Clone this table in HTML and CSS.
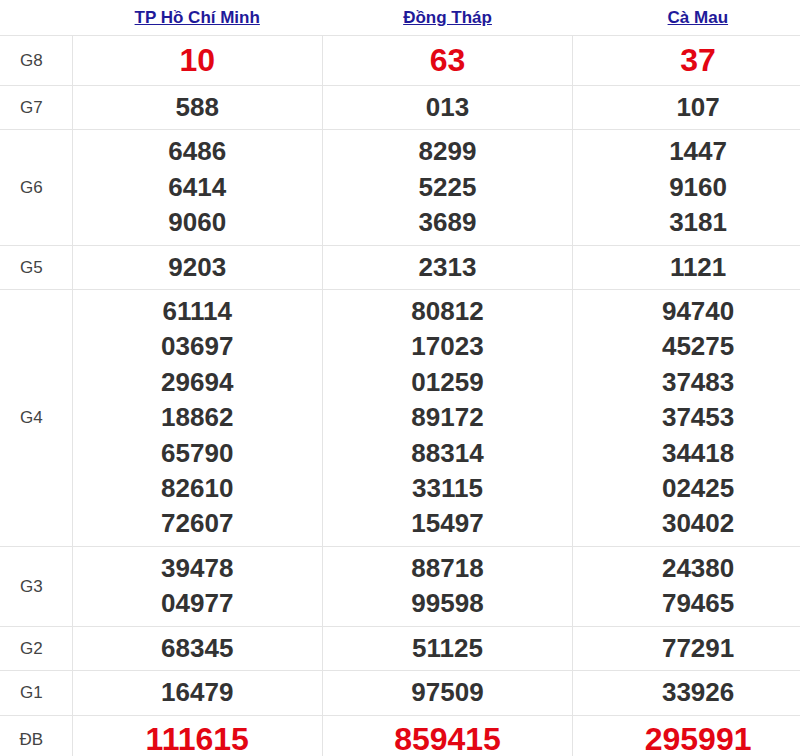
FILE: index.html
```html
<!DOCTYPE html>
<html lang="vi">
<head>
<meta charset="utf-8">
<title>Kết quả xổ số</title>
<link rel="stylesheet" href="styles.css">
</head>
<body>
<table class="kq">
  <colgroup>
    <col class="c-label">
    <col class="c-prov">
    <col class="c-prov">
    <col class="c-prov">
  </colgroup>
  <thead>
    <tr class="head">
      <th></th>
      <th><a href="#">TP Hồ Chí Minh</a></th>
      <th><a href="#">Đồng Tháp</a></th>
      <th><a href="#">Cà Mau</a></th>
    </tr>
  </thead>
  <tbody>
    <tr class="big">
      <td class="lbl">G8</td>
      <td class="red">10</td><td class="red">63</td><td class="red">37</td>
    </tr>
    <tr>
      <td class="lbl">G7</td>
      <td>588</td><td>013</td><td>107</td>
    </tr>
    <tr>
      <td class="lbl">G6</td>
      <td><div>6486</div><div>6414</div><div>9060</div></td>
      <td><div>8299</div><div>5225</div><div>3689</div></td>
      <td><div>1447</div><div>9160</div><div>3181</div></td>
    </tr>
    <tr>
      <td class="lbl">G5</td>
      <td>9203</td><td>2313</td><td>1121</td>
    </tr>
    <tr>
      <td class="lbl">G4</td>
      <td><div>61114</div><div>03697</div><div>29694</div><div>18862</div><div>65790</div><div>82610</div><div>72607</div></td>
      <td><div>80812</div><div>17023</div><div>01259</div><div>89172</div><div>88314</div><div>33115</div><div>15497</div></td>
      <td><div>94740</div><div>45275</div><div>37483</div><div>37453</div><div>34418</div><div>02425</div><div>30402</div></td>
    </tr>
    <tr>
      <td class="lbl">G3</td>
      <td><div>39478</div><div>04977</div></td>
      <td><div>88718</div><div>99598</div></td>
      <td><div>24380</div><div>79465</div></td>
    </tr>
    <tr>
      <td class="lbl">G2</td>
      <td>68345</td><td>51125</td><td>77291</td>
    </tr>
    <tr>
      <td class="lbl">G1</td>
      <td>16479</td><td>97509</td><td>33926</td>
    </tr>
    <tr class="big">
      <td class="lbl">ĐB</td>
      <td class="red">111615</td><td class="red">859415</td><td class="red">295991</td>
    </tr>
  </tbody>
</table>
</body>
</html>
```
FILE: styles.css
```css
html, body {
  margin: 0;
  padding: 0;
  background: #fff;
  overflow: hidden;
}
body {
  font-family: "Liberation Sans", Arial, sans-serif;
  color: #333;
}
.kq {
  border-collapse: collapse;
  table-layout: fixed;
  width: 823px;
}
.c-label { width: 72px; }
.c-prov { width: 250px; }

.head th {
  height: 35px;
  padding: 0;
  border-bottom: 1px solid #e4e4e4;
  text-align: center;
  vertical-align: middle;
}
.head a {
  color: #1f1a9a;
  font-size: 17px;
  font-weight: bold;
  text-decoration: underline;
}
.kq td {
  border-bottom: 1px solid #e4e4e4;
  border-left: 1px solid #e4e4e4;
  text-align: center;
  vertical-align: middle;
  padding: 4px 0;
  font-size: 26px;
  font-weight: bold;
  line-height: 35.4px;
  color: #333;
}
.kq td.lbl {
  border-left: none;
  padding-right: 9px;
  font-size: 17px;
  font-weight: normal;
  color: #444;
}
.kq tr.big td {
  height: 41px;
}
.kq td.red {
  color: #e30613;
  font-size: 32px;
}
```
